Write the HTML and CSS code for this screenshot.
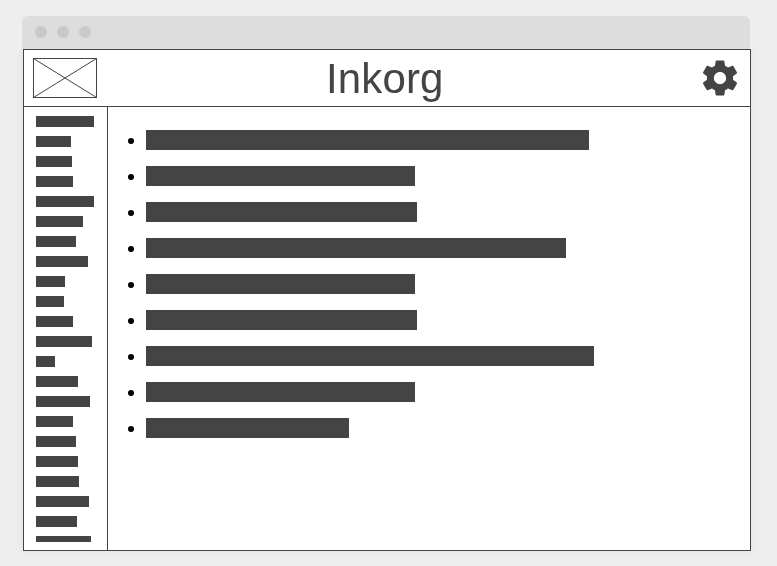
FILE: index.html
```html
<!DOCTYPE html>
<html lang="sv">
<head>
<meta charset="utf-8">
<title>Inkorg</title>
<link rel="stylesheet" href="styles.css">
</head>
<body>
<div class="window">
  <div class="titlebar"><span class="dot"></span><span class="dot"></span><span class="dot"></span></div>
  <div class="frame">
    <header class="header">
      <svg class="logo" viewBox="0 0 64 40"><rect x=".5" y=".5" width="63" height="39"/><path d="M.5.5l63 39M63.5.5l-63 39"/></svg>
      <h1 class="title">Inkorg</h1>
      <svg class="gear" viewBox="0 0 24 24" preserveAspectRatio="none"><path d="M19.43 12.98c.04-.32.07-.64.07-.98s-.03-.66-.07-.98l2.11-1.65c.19-.15.24-.42.12-.64l-2-3.46c-.12-.22-.39-.3-.61-.22l-2.49 1c-.52-.4-1.08-.73-1.69-.98l-.38-2.65C14.46 2.18 14.25 2 14 2h-4c-.25 0-.46.18-.49.42l-.38 2.65c-.61.25-1.17.59-1.69.98l-2.49-1c-.23-.09-.49 0-.61.22l-2 3.46c-.13.22-.07.49.12.64l2.11 1.65c-.04.32-.07.65-.07.98s.03.66.07.98l-2.11 1.65c-.19.15-.24.42-.12.64l2 3.46c.12.22.39.3.61.22l2.49-1c.52.4 1.08.73 1.69.98l.38 2.65c.03.24.24.42.49.42h4c.25 0 .46-.18.49-.42l.38-2.65c.61-.25 1.17-.59 1.69-.98l2.49 1c.23.09.49 0 .61-.22l2-3.46c.12-.22.07-.49-.12-.64l-2.11-1.65zM12 15.5c-1.93 0-3.5-1.57-3.5-3.5s1.57-3.5 3.5-3.5 3.5 1.57 3.5 3.5-1.57 3.5-3.5 3.5z"/></svg>
    </header>
    <div class="body">
      <nav class="sidebar">
        <div class="lines">
          <i style="width:58px"></i><i style="width:35px"></i><i style="width:36px"></i><i style="width:37px"></i>
          <i style="width:58px"></i><i style="width:47px"></i><i style="width:40px"></i><i style="width:52px"></i>
          <i style="width:29px"></i><i style="width:28px"></i><i style="width:37px"></i><i style="width:56px"></i>
          <i style="width:19px"></i><i style="width:42px"></i><i style="width:54px"></i><i style="width:37px"></i>
          <i style="width:40px"></i><i style="width:42px"></i><i style="width:43px"></i><i style="width:53px"></i>
          <i style="width:41px"></i><i style="width:55px"></i>
        </div>
      </nav>
      <ul class="messages">
        <li><i style="width:443px"></i></li>
        <li><i style="width:269px"></i></li>
        <li><i style="width:271px"></i></li>
        <li><i style="width:420px"></i></li>
        <li><i style="width:269px"></i></li>
        <li><i style="width:271px"></i></li>
        <li><i style="width:448px"></i></li>
        <li><i style="width:269px"></i></li>
        <li><i style="width:203px"></i></li>
      </ul>
    </div>
  </div>
</div>
</body>
</html>
```
FILE: styles.css
```css
* { box-sizing: border-box; }
body {
  margin: 0;
  height: 566px;
  overflow: hidden;
  background: #eee;
  font-family: "Liberation Sans", Arial, sans-serif;
  color: #444;
}
.window { width: 729px; margin: 16px 0 0 22px; }
.titlebar {
  display: flex;
  align-items: center;
  gap: 10px;
  width: 728px;
  height: 33px;
  padding: 0 13px 1px;
  background: #ddd;
  border-radius: 6px 6px 0 0;
}
.dot { width: 12px; height: 12px; border-radius: 50%; background: #c9c9c9; }
.frame {
  display: flex;
  flex-direction: column;
  width: 728px;
  height: 502px;
  margin-left: 1px;
  background: #fff;
  border: 1px solid #444;
  box-shadow: 0 0 8px rgba(0, 0, 0, .06);
  clip-path: inset(0 -12px -12px -12px);
}
.header {
  display: flex;
  align-items: center;
  justify-content: space-between;
  height: 57px;
  padding: 0 9px;
  border-bottom: 1px solid #444;
}
.logo { width: 64px; height: 40px; fill: none; stroke: #444; }
.title {
  margin: 0 0 0 -26px;
  padding-top: 2px;
  font-size: 42px;
  font-weight: 400;
  line-height: 54px;
  letter-spacing: .15px;
  will-change: transform;
}
.gear { width: 42px; height: 42px; fill: #444; }
.body { display: flex; flex: 1; min-height: 0; }
.sidebar { width: 84px; padding: 9px 12px 8px; border-right: 1px solid #444; }
.lines { height: 100%; width: 60px; overflow: hidden; }
.lines i { display: block; height: 11px; margin-bottom: 9px; background: #444; }
.messages { flex: 1; margin: 0; padding: 23px 20px 0; list-style: none; }
.messages li { display: flex; align-items: center; height: 20px; margin-bottom: 16px; }
.messages li::before {
  content: "";
  width: 6px;
  height: 6px;
  margin: 2px 12px 0 0;
  border-radius: 50%;
  background: #000;
}
.messages i { height: 20px; background: #444; }
```
